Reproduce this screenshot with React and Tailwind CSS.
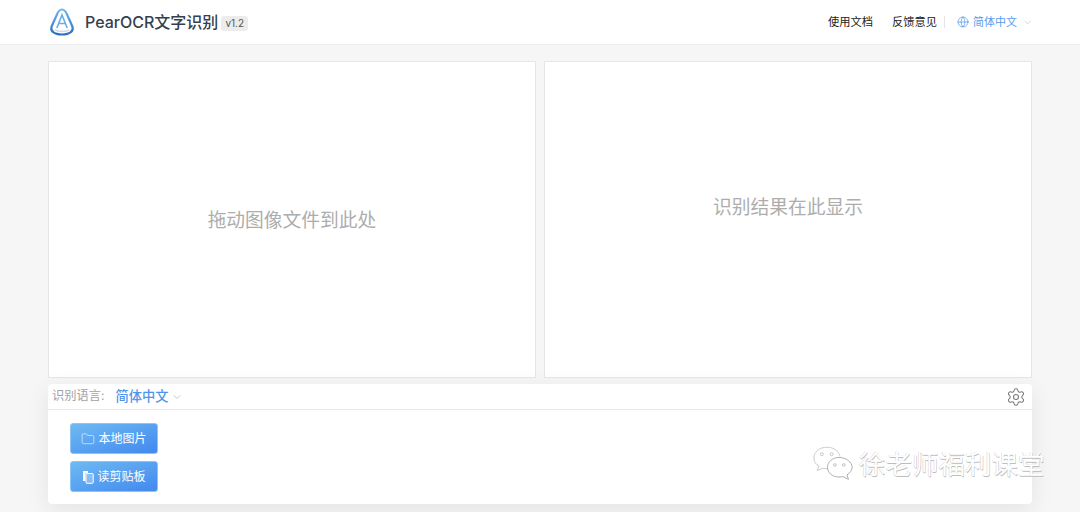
import { ChevronDown, Folder, Globe, Settings } from 'lucide-react';

const cjk = "font-['Inter','Noto_Sans_CJK_SC',sans-serif]";

function Logo() {
    return (
        <svg width="26" height="28" viewBox="0 0 26 28" fill="none">
            <defs>
                <linearGradient id="logoStroke" x1="0" y1="0" x2="0" y2="1">
                    <stop offset="0" stopColor="#6db6f2" />
                    <stop offset="1" stopColor="#2f6fc0" />
                </linearGradient>
            </defs>
            <path d="M13 1.5C10 1.5 8.8 4 7.5 7.5L2.6 18.5C1 23 5 26.5 13 26.5C21 26.5 25 23 23.4 18.5L18.5 7.5C17.2 4 16 1.5 13 1.5Z" stroke="url(#logoStroke)" strokeWidth="2.2" />
            <path d="M7.8 20L13 7L18.2 20" stroke="#6aaee6" strokeWidth="1.6" />
            <path d="M9.5 15.5H16.5" stroke="#6aaee6" strokeWidth="1.5" />
            <path d="M6 21.5C8 24 18 24 20 21.5" stroke="#d5dce4" strokeWidth="1.8" />
        </svg>
    );
}

function ClipboardIcon() {
    return (
        <svg width="12" height="14" viewBox="0 0 12 14" fill="none">
            <path d="M1 1H6V3H3.5V11H1Z" fill="#ffffff" />
            <rect x="4" y="3.5" width="7.2" height="9.8" rx="0.8" stroke="#ffffff" strokeWidth="1" fill="#ffffff" fillOpacity="0.25" />
        </svg>
    );
}

function WechatMark() {
    return (
        <svg width="41" height="36" viewBox="0 0 44 38" fill="none">
            <path d="M15 1C7 1 1 6 1 12.5C1 16.5 3 19.5 6.5 21.5L4.5 26L10.5 23.5C12 24 13.5 24 15 24" stroke="#c8c8c8" strokeWidth="1" fill="#ffffff" />
            <path d="M15 1C22 1 28 5 29 11" stroke="#c8c8c8" strokeWidth="1" />
            <circle cx="9.5" cy="8.5" r="1.6" stroke="#b8b8b8" strokeWidth="0.8" />
            <circle cx="20" cy="8.5" r="1.6" stroke="#b8b8b8" strokeWidth="0.8" />
            <path d="M28 12C20.5 12 15.5 17 15.5 22.5C15.5 28 20.5 33 28 33C29.5 33 31 32.8 32 32.4L38 35.5L36.5 30.5C40 28.5 42 25.5 42 22.5C42 17 35.5 12 28 12Z" stroke="#a8a8a8" strokeWidth="1" fill="#ffffff" />
            <circle cx="23.5" cy="20" r="1.4" stroke="#b0b0b0" strokeWidth="0.8" />
            <circle cx="33" cy="20" r="1.4" stroke="#b0b0b0" strokeWidth="0.8" />
        </svg>
    );
}

function ActionButton({ icon, children }) {
    return (
        <button className="flex h-[31px] w-[88px] items-center justify-center gap-[3px] rounded-[3px] border border-[#8cc4f5] bg-gradient-to-br from-[#6fb9f3] to-[#4289ee] text-[12px] text-white">
            {icon}
            <span>{children}</span>
        </button>
    );
}

export default function App() {
    return (
        <div className={`relative flex h-[512px] w-[1080px] flex-col overflow-hidden bg-[#f6f6f6] ${cjk}`}>
            {/* Header */}
            <header className="flex h-[45px] shrink-0 items-center border-b border-[#efefef] bg-white pl-[49px] pr-[48px]">
                <Logo />
                <span className="ml-[10px] text-[16px] font-medium text-[#34404f]">PearOCR文字识别</span>
                <span className="ml-[3px] mt-[3px] rounded-[3px] bg-[#ececec] px-[4px] text-[10px] leading-[15px] text-[#555]">v1.2</span>
                <nav className="ml-auto flex items-center text-[11.25px] text-[#222]">
                    <a>使用文档</a>
                    <a className="ml-[19px]">反馈意见</a>
                    <span className="ml-[7px] h-[12px] w-px bg-[#e5e5e5]" />
                    <Globe className="ml-[12px] h-[12px] w-[12px] text-[#5b9cec]" strokeWidth={1.5} />
                    <span className="ml-[4px] text-[11px] text-[#5b9cec]">简体中文</span>
                    <ChevronDown className="ml-[5px] mr-[-1px] h-[11px] w-[11px] text-[#b5c6dc]" strokeWidth={1.5} />
                </nav>
            </header>

            <main className="flex flex-1 flex-col gap-[6px] px-[48px] pt-[16px]">
                {/* Panels */}
                <div className="grid h-[317px] grid-cols-2 gap-[8px]">
                    <div className="flex items-center justify-center border border-[#e6e6e6] bg-white pt-[4px] text-[18.75px] text-[#adadad]">
                        拖动图像文件到此处
                    </div>
                    <div className="flex items-center justify-center border border-[#e6e6e6] bg-white pb-[22px] text-[18.75px] text-[#adadad]">
                        识别结果在此显示
                    </div>
                </div>

                {/* Toolbar card */}
                <section className="h-[120px] rounded-[4px] bg-white shadow-[0_6px_24px_rgba(0,0,0,0.08)]">
                    <div className="flex h-[26px] items-center border-b border-[#e8e8e8] pl-[4px] pr-[6px]">
                        <span className="text-[12.25px] text-[#a3a3a3]">识别语言:</span>
                        <span className="ml-[11px] text-[13.25px] font-medium text-[#4f94ea]">简体中文</span>
                        <ChevronDown className="ml-[2px] h-[12px] w-[12px] text-[#a9b8cb]" strokeWidth={1.5} />
                        <Settings className="ml-auto h-[20px] w-[20px] text-[#7b7b7b]" strokeWidth={1.3} />
                    </div>
                    <div className="flex flex-col gap-[7px] pl-[22px] pt-[13px]">
                        <ActionButton icon={<Folder className="h-[14px] w-[14px]" strokeWidth={1} />}>本地图片</ActionButton>
                        <ActionButton icon={<ClipboardIcon />}>读剪贴板</ActionButton>
                    </div>
                </section>
            </main>

            {/* Watermark over the card */}
            <div className="absolute left-[813px] top-[446px] flex items-center gap-[5px]">
                <WechatMark />
                <span className="text-[26.5px] leading-[36px] text-white [text-shadow:0.6px_0.6px_0_#bdbdbd,-0.4px_-0.4px_0_#d4d4d4]">徐老师福利课堂</span>
            </div>
        </div>
    );
}
